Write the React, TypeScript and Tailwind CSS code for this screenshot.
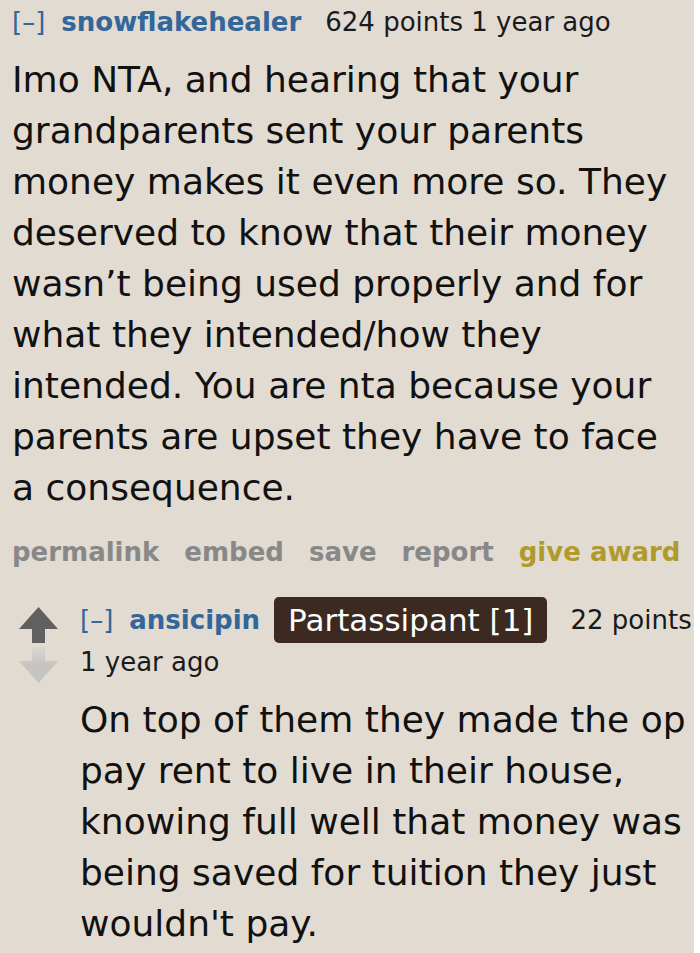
const firstLines = [
  'Imo NTA, and hearing that your',
  'grandparents sent your parents',
  'money makes it even more so. They',
  'deserved to know that their money',
  'wasn’t being used properly and for',
  'what they intended/how they',
  'intended. You are nta because your',
  'parents are upset they have to face',
  'a consequence.',
];

const replyLines = [
  'On top of them they made the op',
  'pay rent to live in their house,',
  'knowing full well that money was',
  'being saved for tuition they just',
  "wouldn't pay.",
];

function UpArrow() {
  return (
    <svg width="39" height="36" viewBox="0 0 39 36" className="block">
      <path d="M19.5 0 L39 22 L26 22 L26 36 L13 36 L13 22 L0 22 Z" fill="#606060" />
    </svg>
  );
}

function DownArrow() {
  return (
    <svg width="39" height="36" viewBox="0 0 39 36" className="block">
      <defs>
        <linearGradient id="fade" x1="0" y1="0" x2="0" y2="1">
          <stop offset="0" stopColor="#d9d6d2" />
          <stop offset="0.5" stopColor="#c6c4c1" />
          <stop offset="1" stopColor="#c6c4c1" />
        </linearGradient>
      </defs>
      <path d="M19.5 36 L39 14 L26 14 L26 0 L13 0 L13 14 L0 14 Z" fill="url(#fade)" />
    </svg>
  );
}

function ActionLinks() {
  return (
    <div className="flex gap-[25px] text-[26px] font-bold text-[#888888] leading-[30px] whitespace-nowrap">
      <span>permalink</span>
      <span>embed</span>
      <span>save</span>
      <span>report</span>
      <span className="text-[#b09a2c]">give award</span>
    </div>
  );
}

function Body({ lines }: { lines: string[] }) {
  return (
    <div className="text-[36px] leading-[51px] text-[#111111] whitespace-nowrap">
      {lines.map((l) => (
        <div key={l}>{l}</div>
      ))}
    </div>
  );
}

export default function App() {
  return (
    <div className="w-[700px] h-[953px] overflow-hidden flex bg-white font-['DejaVu_Sans',Verdana,sans-serif]">
      <div className="w-[694px] h-full bg-[#e2dbd2] pl-[12px] pt-[6px]">
        <div className="flex items-baseline text-[26px] leading-[32px] whitespace-nowrap">
          <span className="text-[#336699]">[–]</span>
          <span className="ml-[16px] font-bold text-[#336699]">snowflakehealer</span>
          <span className="ml-[24px] text-[#1a1a1a]">624 points 1 year ago</span>
        </div>
        <div className="mt-[16px]">
          <Body lines={firstLines} />
        </div>
        <div className="mt-[24px]">
          <ActionLinks />
        </div>

        <div className="flex mt-[30px] ml-[7px]">
          <div className="flex flex-col gap-[4px] pt-[10px] w-[61px] shrink-0">
            <UpArrow />
            <DownArrow />
          </div>
          <div>
            <div className="flex items-center text-[26px] whitespace-nowrap h-[46px]">
              <span className="text-[#336699]">[–]</span>
              <span className="ml-[16px] font-bold text-[#336699]">ansicipin</span>
              <span className="ml-[14px] bg-[#3c2a21] text-white rounded-[5px] px-[14px] h-[46px] flex items-center text-[31px]">
                Partassipant [1]
              </span>
              <span className="ml-[23px] text-[#1a1a1a]">22 points</span>
            </div>
            <div className="mt-[3px] text-[26px] leading-[32px] text-[#1a1a1a]">1 year ago</div>
            <div className="mt-[16px]">
              <Body lines={replyLines} />
            </div>
          </div>
        </div>
      </div>
    </div>
  );
}
